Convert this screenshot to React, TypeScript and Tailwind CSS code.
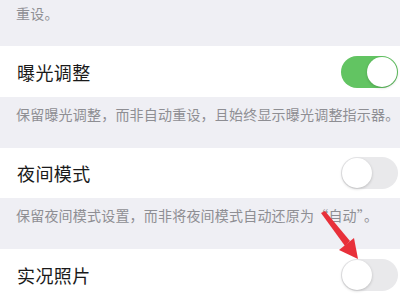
import React from 'react';

const font = { fontFamily: '"Noto Sans CJK SC", "Noto Sans", sans-serif' };

function Toggle({ on }: { on: boolean }) {
  return (
    <div
      className={`relative h-[32px] w-[57px] shrink-0 rounded-full ${
        on ? 'bg-[#62c462]' : 'bg-[#e9e9eb]'
      }`}
    >
      <div
        className={`absolute top-[1px] h-[30px] w-[30px] rounded-full bg-white shadow-[0_1px_3px_rgba(0,0,0,0.2)] ${
          on ? 'right-[1px]' : 'left-[1px]'
        }`}
      />
    </div>
  );
}

function Row({ title, on, h }: { title: string; on: boolean; h: string }) {
  return (
    <div className={`flex items-center justify-between bg-white pl-[17px] pr-[2px] ${h}`}>
      <span className="text-[18px] leading-[24px] tracking-[0.4px] text-[#1a1a1a]">{title}</span>
      <Toggle on={on} />
    </div>
  );
}

function Caption({ text, h }: { text: string; h: string }) {
  return (
    <div className={`bg-[#efeff4] pl-4 pt-[8px] ${h}`}>
      <p className="whitespace-nowrap text-[14px] leading-[18px] tracking-[0.2px] text-[#8e8e93]">{text}</p>
    </div>
  );
}

export default function App() {
  return (
    <div className="relative h-[300px] w-[400px] overflow-hidden bg-[#efeff4]" style={font}>
      <div className="h-[46px] px-4 pt-[4px]">
        <p className="text-[14px] leading-[18px] tracking-[0.2px] text-[#8e8e93]">重设。</p>
      </div>
      <Row title="曝光调整" on h="h-[51px]" />
      <Caption text="保留曝光调整，而非自动重设，且始终显示曝光调整指示器。" h="h-[51px]" />
      <Row title="夜间模式" on={false} h="h-[50px]" />
      <Caption text="保留夜间模式设置，而非将夜间模式自动还原为“自动”。" h="h-[51px]" />
      <Row title="实况照片" on={false} h="h-[52px]" />

      <svg className="absolute left-0 top-0" width="400" height="300" viewBox="0 0 400 300">
        <polygon points="321,213 325,211 350,241 345,246" fill="#e8303a" />
        <polygon points="358,259 339,250 354,238" fill="#e8303a" />
      </svg>
    </div>
  );
}
